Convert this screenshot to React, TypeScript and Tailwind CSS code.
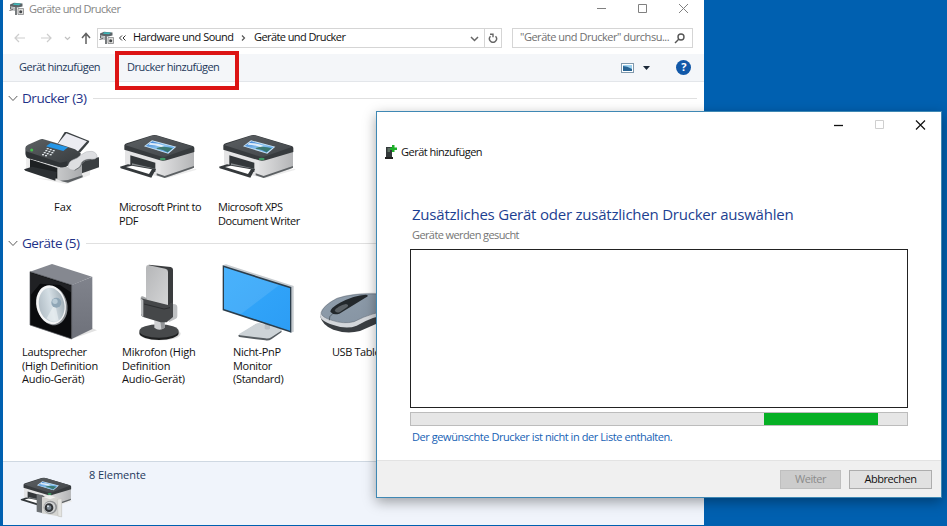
import React from "react";

type Part = { children: React.ReactNode };

function FaxIcon() {
  return (
    <svg width="83" height="60" viewBox="60 51 249 180">
      <defs>
        <linearGradient id="fxTop" x1="0" y1="0" x2="1" y2="1">
          <stop offset="0" stopColor="#5d6164" />
          <stop offset="1" stopColor="#34383b" />
        </linearGradient>
        <linearGradient id="fxSide" x1="0" y1="0" x2="1" y2="0">
          <stop offset="0" stopColor="#efefef" />
          <stop offset="1" stopColor="#a9abad" />
        </linearGradient>
      </defs>
      <path d="M110 205L200 222L270 195V180L200 210Z" fill="#ebebeb" />
      <path d="M240 148L297 142V172L246 190Z" fill="#3b3f42" />
      <path d="M78 128L172 168L206 172L246 160V200L204 216Q196 218 186 214L78 176Z" fill="url(#fxSide)" />
      <path d="M90 148L172 174V206L90 180Z" fill="#1d2022" />
      <path d="M72 178L96 170L170 186L166 212L76 182Z" fill="#2c3033" />
      <path d="M180 212L204 218L248 202V196L204 210Z" fill="#5c6063" />
      <path d="M194 66L201 66L268 93L266 98L240 128L166 112Z" fill="#3b4043" />
      <path d="M199 70L261 94L232 126L168 108Z" fill="#ececf2" />
      <path d="M128 87L166 98L225 118L242 130Q244 138 236 144L202 168Q190 174 176 170L84 144Q76 140 76 128V114Q76 108 84 104L118 89Q124 86 128 87Z" fill="url(#fxTop)" />
      <path d="M78 124L180 158L202 154V168Q190 174 176 170L84 144Q76 140 78 124Z" fill="#2f3336" />
      <path d="M152 99L204 112L190 123L138 109Z" fill="#2496e8" />
      <g fill="#dfe4e8">
        <rect x="140" y="114" width="6" height="4" /><rect x="149" y="117" width="6" height="4" /><rect x="158" y="120" width="6" height="4" />
        <rect x="136" y="120" width="6" height="4" /><rect x="145" y="123" width="6" height="4" /><rect x="154" y="126" width="6" height="4" />
        <rect x="131" y="126" width="6" height="4" /><rect x="140" y="129" width="6" height="4" /><rect x="149" y="132" width="6" height="4" />
        <rect x="126" y="132" width="6" height="4" /><rect x="135" y="135" width="6" height="4" />
      </g>
      <circle cx="95" cy="120" r="4.5" fill="#45c24d" />
      <path d="M204 172Q206 154 218 150Q232 146 244 134Q258 122 276 124Q292 128 291 142Q286 150 270 147Q254 146 244 158Q242 172 226 180Q208 182 204 172Z" fill="#dddee1" stroke="#b0b3b6" strokeWidth="1.5" />
      <path d="M224 181Q243 173 247 159Q256 149 270 149" fill="none" stroke="#6b6f72" strokeWidth="3" />
    </svg>
  );
}

function PrinterBody() {
  return (
    <>
      <defs>
        <linearGradient id="prTop" x1="0" y1="0" x2="1" y2="1">
          <stop offset="0" stopColor="#5b5f62" />
          <stop offset="1" stopColor="#42464a" />
        </linearGradient>
        <linearGradient id="prSide" x1="0" y1="0" x2="1" y2="0">
          <stop offset="0" stopColor="#e0e0e1" />
          <stop offset="1" stopColor="#b4b5b7" />
        </linearGradient>
        <linearGradient id="prScr" x1="0" y1="0" x2="1" y2="1">
          <stop offset="0" stopColor="#2d74cc" />
          <stop offset=".5" stopColor="#8cc4ef" />
          <stop offset="1" stopColor="#3b8fdd" />
        </linearGradient>
      </defs>
      <path d="M480 200L586 176L590 179L500 205Z" fill="#ececec" />
      <path d="M375 116L485 150V202L375 176Z" fill="#e4e4e5" />
      <path d="M480 150L582 122V168Q582 174 574 177L504 201Q494 204 482 200Z" fill="url(#prSide)" />
      <path d="M470 196L494 204L582 173V168L494 198L470 190Z" fill="#5c6063" />
      <path d="M391 136L466 158V186L391 172Z" fill="#33373a" />
      <path d="M396 160L466 176V184L396 170Z" fill="#85898c" />
      <path d="M360 170L384 163L468 177L454 203L362 175Z" fill="#34383b" />
      <path d="M378 171L396 167L456 178L447 192Z" fill="#fff" />
      <path d="M373 106Q374 102 380 100L452 77Q462 74 470 76L578 108Q583 110 583 114V126L502 150Q490 154 480 151L373 119Z" fill="#373b3e" />
      <path d="M375 105L454 78Q462 75 470 77L580 110L500 139Q490 142 480 139Z" fill="url(#prTop)" />
      <path d="M456 91L529 110L505 131L432 109Z" fill="#cfe8f8" />
      <path d="M457 94L524 111L503 128L437 108Z" fill="url(#prScr)" />
      <path d="M450 99Q474 98 494 108L484 111Q464 104 446 104Z" fill="#fff" opacity=".8" />
      <path d="M470 114Q492 106 518 115L503 127Q490 118 470 116Z" fill="#33705e" opacity=".85" />
      <ellipse cx="488" cy="147" rx="9" ry="4" fill="#3f9a65" />
    </>
  );
}

function PrinterIcon() {
  return (
    <svg width="82" height="50" viewBox="351 60 246 150">
      <PrinterBody />
    </svg>
  );
}

function SpeakerIcon() {
  return (
    <svg width="69" height="79" viewBox="84 81 207 237">
      <defs>
        <linearGradient id="spCone" x1="0" y1="0" x2="1" y2="0">
          <stop offset="0" stopColor="#b3bfc7" />
          <stop offset=".5" stopColor="#d5dfe5" />
          <stop offset="1" stopColor="#a3b0b8" />
        </linearGradient>
        <linearGradient id="spSide" x1="0" y1="0" x2="0" y2="1">
          <stop offset="0" stopColor="#80838c" />
          <stop offset="1" stopColor="#6e717a" />
        </linearGradient>
      </defs>
      <path d="M215 312L291 286L276 280Z" fill="#e2e2e2" />
      <path d="M90 110L156 87L276 125L215 151Z" fill="#858890" />
      <path d="M215 150L277 125V282L215 312Z" fill="url(#spSide)" />
      <path d="M90 110L215 150V312L90 270Z" fill="#0b0c0e" stroke="#54575d" strokeWidth="2" />
      <path d="M92 113L213 152V172L180 150L120 146L92 180Z" fill="#2e3033" opacity=".6" />
      <ellipse cx="157" cy="212" rx="45" ry="59" transform="rotate(-12 157 212)" fill="#85898d" />
      <ellipse cx="153" cy="209" rx="44" ry="59" transform="rotate(-12 153 209)" fill="#f5f6f7" />
      <ellipse cx="155" cy="210" rx="38" ry="52" transform="rotate(-12 155 210)" fill="url(#spCone)" />
      <path d="M165 205L140 250Q156 266 176 256Z" fill="#eef3f5" opacity=".6" />
      <circle cx="169" cy="203" r="15" fill="#8fa6b6" />
      <circle cx="165" cy="199" r="8" fill="#b9cbd6" />
    </svg>
  );
}

function MicIcon() {
  return (
    <svg width="43" height="79" viewBox="414 81 129 237">
      <defs>
        <linearGradient id="mcFace" x1="0" y1="0" x2="1" y2="1">
          <stop offset="0" stopColor="#b5b6b8" />
          <stop offset="1" stopColor="#d4d5d6" />
        </linearGradient>
      </defs>
      <ellipse cx="480" cy="296" rx="62" ry="20" fill="#dedede" />
      <ellipse cx="477" cy="294" rx="59" ry="21" fill="#1f2021" />
      <ellipse cx="477" cy="288" rx="59" ry="20" fill="#47494b" />
      <path d="M463 248H494V278Q478 290 463 278Z" fill="#cfd0d2" />
      <path d="M480 250H494V279L484 283Z" fill="#929497" />
      <path d="M446 89L512 96Q519 98 519 104V215L500 220L446 200Z" fill="#3a3c3e" />
      <path d="M444 90L496 101Q504 103 504 110V212L438 196V98Q438 90 444 90Z" fill="url(#mcFace)" />
      <path d="M422 188Q422 184 428 184L440 189V196H422Z" fill="#a3a5a7" />
      <path d="M512 206L526 208Q532 210 532 216V244Q532 250 526 252L506 262Z" fill="#bfc1c3" />
      <path d="M423 190L504 210L519 202V246L500 262H482L432 247Q423 244 423 236Z" fill="#454749" />
      <path d="M432 207L492 222L510 218" fill="none" stroke="#2b2d2f" strokeWidth="3" />
      <path d="M423 190V236Q423 243 430 246V196Z" fill="#b8babc" />
    </svg>
  );
}

function MonitorIcon() {
  return (
    <svg width="75" height="80" viewBox="60 81 225 240">
      <defs>
        <linearGradient id="mnScr" x1="0" y1="0" x2="1" y2="1">
          <stop offset="0" stopColor="#35aafc" />
          <stop offset="1" stopColor="#2c9df5" />
        </linearGradient>
      </defs>
      <path d="M114 302L168 268Q174 265 182 267L240 284Q247 287 244 292L214 313Q206 318 196 316L118 306Z" fill="#565c61" />
      <path d="M116 298L168 266Q174 263 182 265L240 281Q248 284 243 288L214 307Q206 312 196 310L120 301Z" fill="#cdd3d7" />
      <path d="M194 250L210 254V281Q202 286 194 281Z" fill="#b9bfc4" />
      <path d="M68 91L78 88L281 153V290L272 293Z" fill="#c6cbcf" />
      <path d="M68 91L274 156V293L68 226Z" fill="#2b3d4b" />
      <path d="M72 97L270 160V287L72 222Z" fill="url(#mnScr)" />
      <path d="M72 97L238 150L122 238L72 222Z" fill="#fff" opacity=".1" />
    </svg>
  );
}

function MouseIcon() {
  return (
    <svg width="74" height="80" viewBox="354 81 222 240">
      <defs>
        <linearGradient id="msTop" x1="0" y1="0" x2="1" y2="1">
          <stop offset="0" stopColor="#909eac" />
          <stop offset="1" stopColor="#8492a1" />
        </linearGradient>
      </defs>
      <path d="M360 242Q366 270 400 284Q440 298 480 288L576 246V200L420 200Z" fill="#3a3e42" />
      <path d="M360 238Q362 214 408 190Q460 170 540 174L576 190V236Q520 242 470 272Q440 284 400 270Q358 258 360 238Z" fill="#d4d7db" />
      <path d="M364 232Q372 210 412 190Q460 174 540 177L576 190V226Q520 230 462 260Q430 268 396 256Q362 246 364 232Z" fill="url(#msTop)" stroke="#5b6570" strokeWidth="1.5" />
      <path d="M391 230Q392 218 420 203Q462 181 498 179Q510 182 496 188L418 236Q400 242 391 230Z" fill="#23282c" />
      <path d="M404 226Q414 212 438 207Q448 209 442 216L420 231Q408 236 404 226Z" fill="#5a6065" />
      <path d="M398 236Q386 244 388 256" fill="none" stroke="#3a4249" strokeWidth="2" />
    </svg>
  );
}

function PrinterCameraIcon() {
  return (
    <svg width="52" height="42" viewBox="60 108 156 126">
      <g transform="translate(-183 62) scale(.68)">
        <PrinterBody />
      </g>
      <path d="M110 162L130 166V220L110 215Z" fill="#6c7073" />
      <path d="M126 172L150 166L185 176V231L126 220Z" fill="#d4d4d1" />
      <path d="M172 178L185 176V231L174 228Z" fill="#e4e4e1" stroke="#a9aaa8" strokeWidth="1" />
      <path d="M132 172L148 166L166 172L150 178Z" fill="#f0f0ee" />
      <circle cx="151" cy="202" r="20" fill="#8f9193" />
      <circle cx="149" cy="202" r="17" fill="#d0d2d3" />
      <circle cx="147" cy="203" r="13" fill="#303336" />
      <circle cx="147" cy="203" r="7" fill="#7b868f" />
      <circle cx="144" cy="199" r="3" fill="#d9e3ea" />
    </svg>
  );
}

function DevicesGlyph() {
  return (
    <svg width="16" height="14" viewBox="0 0 16 14">
      <path d="M1 2.500L5 .8L13.500 1.500V4.500L9 5.500L1 4.500Z" fill="#5c6468" />
      <path d="M5 1.200L12 1.500L10 3.200L4 2.800Z" fill="#3db9ba" />
      <path d="M1.500 4.800L6 5.500V9L1.500 8Z" fill="#b4b8ba" />
      <path d="M.5 8.500L4 7.500M1.500 4.500V7" stroke="#666" />
      <path d="M6 5H8V13H6Z" fill="#777b7d" />
      <path d="M9 6.500H14.500V12.500H9Z" fill="#dededc" stroke="#858788" strokeWidth=".8" />
      <circle cx="11.700" cy="9.800" r="1.500" fill="#44474a" />
    </svg>
  );
}

function Chevron() {
  return (
    <svg width="10" height="7" viewBox="0 0 10 7" fill="none" stroke="#5c5c5c" strokeWidth="1">
      <path d="M.7 1L5 5.500L9.300 1" />
    </svg>
  );
}

function GroupHeader({ children }: Part) {
  return (
    <div className="flex h-[18px] items-center pl-[5px] pr-[7px]">
      <Chevron />
      <span className="ml-1 text-[13.5px] leading-[18px] tracking-[-0.45px] text-[#1e3287]">{children}</span>
      <div className="ml-[6px] mt-px h-px flex-1 bg-[#e0e0e0]" />
    </div>
  );
}

function Label({ children, className }: Part & { className: string }) {
  return (
    <div className={`whitespace-nowrap text-[11px] leading-[13.5px] text-[#111] ${className}`}>{children}</div>
  );
}

function MainWindow() {
  return (
    <div className="absolute left-[3px] top-0 flex h-[525px] w-[701px] flex-col overflow-hidden bg-white">
      <div className="flex h-[18px] items-center pl-[6px]">
        <DevicesGlyph />
        <span className="ml-1 text-[11px] tracking-[-0.58px] text-[#858585]">Geräte und Drucker</span>
        <svg className="ml-auto mr-[14px]" width="94" height="12" viewBox="0 0 94 12" fill="none" stroke="#808080">
          <path d="M1 5.500H10M42.500 1.500H50.500V9.500H42.500ZM83 1L92 10M92 1L83 10" />
        </svg>
      </div>
      <div className="mt-[10px] flex h-5 items-center pl-[10px]">
        <svg width="78" height="14" viewBox="0 0 78 14" fill="none">
          <path d="M12 7H2M6 3L2 7L6 11M28 7H38M34 3L38 7L34 11" stroke="#cdcdcd" strokeWidth="1.200" />
          <path d="M52 6L54.500 8.500L57 6" stroke="#c0c0c0" strokeWidth="1.200" />
          <path d="M73 13V3M69 7L73 2.500L77 7" stroke="#606060" strokeWidth="1.500" />
        </svg>
        <div className="ml-[6px] flex h-5 w-[405px] items-center border border-[#d5d5d5] pl-px">
          <DevicesGlyph />
          <svg className="ml-[3px]" width="9" height="8" viewBox="0 0 9 8" fill="none" stroke="#333">
            <path d="M4 1.500L1.500 4L4 6.500M7.500 1.500L5 4L7.500 6.500" />
          </svg>
          <span className="mb-[2px] ml-[6px] w-[101px] whitespace-nowrap text-[11px] tracking-[-0.5px] text-[#111]">Hardware und Sound</span>
          <svg className="ml-[7px]" width="5" height="8" viewBox="0 0 5 8" fill="none" stroke="#555">
            <path d="M1 1.500L3.500 4L1 6.500" strokeWidth="1.200" />
          </svg>
          <span className="mb-[2px] ml-2 whitespace-nowrap text-[11px] tracking-[-0.58px] text-[#111]">Geräte und Drucker</span>
          <svg className="ml-auto mr-[5px] mt-[2px]" width="9" height="6" viewBox="0 0 9 6" fill="none" stroke="#666" strokeWidth="1.500">
            <path d="M1 1L4.500 4.500L8 1" />
          </svg>
          <div className="flex h-full w-[17px] items-center justify-center border-l border-[#d5d5d5]">
            <svg width="10" height="10" viewBox="0 0 10 10" fill="none" stroke="#666" strokeWidth="1.400">
              <path d="M2.500 3.200A3.500 3.500 0 1 0 7.500 3.200M2 1.200H5V4.200" />
            </svg>
          </div>
        </div>
        <div className="ml-[10px] flex h-5 w-[181px] items-center border border-[#d5d5d5] pl-[7px]">
          <span className="mb-px whitespace-nowrap text-[11px] tracking-[-0.48px] text-[#707070]">"Geräte und Drucker" durchsu...</span>
          <svg className="ml-auto mr-[6px] shrink-0" width="12" height="11" viewBox="0 0 12 11" fill="none" stroke="#555" strokeWidth="1.400">
            <circle cx="7" cy="4" r="3" />
            <path d="M4.700 6.300L1 10" />
          </svg>
        </div>
      </div>
      <div className="mt-[6px] flex h-7 items-center border-b border-[#e3e6ea] bg-[#f4f6f9] pl-4 text-[11px] tracking-[-0.5px] text-[#1e395b]">
        <span className="w-[108px] whitespace-nowrap">Gerät hinzufügen</span>
        <span className="whitespace-nowrap">Drucker hinzufügen</span>
        <svg className="ml-auto" width="29" height="10" viewBox="0 0 29 10">
          <rect x=".5" y=".5" width="12" height="9" fill="#fff" stroke="#8099ad" />
          <path d="M2 2H11V8H2Z" fill="#9bd0ef" />
          <path d="M2 3Q6 3 11 6V8H2Z" fill="#286494" />
          <path d="M22 3H29L25.500 7Z" fill="#1b2838" />
        </svg>
        <div className="ml-[26px] mr-[13px] flex size-[15px] items-center justify-center rounded-full bg-[#1158a8] text-[11px] font-bold text-white">?</div>
      </div>
      <div className="mt-[7px]">
        <GroupHeader>Drucker (3)</GroupHeader>
      </div>
      <div className="grid h-[127px] grid-cols-[repeat(4,100px)] grid-rows-[93px_auto] pl-[9px] pt-5">
        <div className="flex h-[73px] items-start pl-2"><FaxIcon /></div>
        <div className="pl-[5px] pt-[3px]"><PrinterIcon /></div>
        <div className="pl-1 pt-[3px]"><PrinterIcon /></div>
        <div />
        <Label className="-mt-[20px] pl-[42px]">Fax</Label>
        <Label className="-mt-[20px] pl-[7px] tracking-[-0.4px]">Microsoft Print to<br />PDF</Label>
        <Label className="-mt-[20px] pl-[6px] tracking-[-0.45px]">Microsoft XPS<br />Document Writer</Label>
      </div>
      <GroupHeader>Geräte (5)</GroupHeader>
      <div className="grid grid-cols-[repeat(4,100px)] grid-rows-[83px_auto] pl-[9px] pt-[10px]">
        <div className="pl-4"><SpeakerIcon /></div>
        <div className="pl-[26px]"><MicIcon /></div>
        <div className="pl-2"><MonitorIcon /></div>
        <div className="pl-[6px]"><MouseIcon /></div>
        <Label className="pl-[10px] tracking-[-0.25px]">Lautsprecher<br />(High Definition<br />Audio-Gerät)</Label>
        <Label className="pl-[10px] tracking-[-0.2px]">Mikrofon (High<br />Definition<br />Audio-Gerät)</Label>
        <Label className="pl-[21px] tracking-[-0.3px]">Nicht-PnP<br />Monitor<br />(Standard)</Label>
        <Label className="pl-5 tracking-[-0.4px]">USB Tablet</Label>
      </div>
      <div className="mt-auto flex h-16 items-start border-t border-[#cfd8e2] bg-[#f0f4fb] pl-[17px] pt-[14px]">
        <PrinterCameraIcon />
        <span className="-mt-[9px] ml-[17px] text-[11px] leading-4 tracking-[-0.05px] text-[#1e395b]">8 Elemente</span>
      </div>
      <div className="absolute left-[112px] top-[51px] h-[39px] w-[124px] border-4 border-[#dc1414]" />
    </div>
  );
}

function Dialog() {
  return (
    <div className="absolute left-[376px] top-[111px] flex h-[387px] w-[566px] flex-col border border-[#3f88b4] bg-white shadow-[0_4px_12px_rgba(0,0,0,0.35)]">
      <div className="flex h-[26px] justify-end pr-[15px] pt-[7px]">
        <svg width="93" height="12" viewBox="0 0 93 12" fill="none">
          <path d="M1 6.500H10" stroke="#111" strokeWidth="1.300" />
          <path d="M42.500 1.500H50.500V9.500H42.500Z" stroke="#cfcfcf" />
          <path d="M83 1.500L92 10.500M92 1.500L83 10.500" stroke="#111" strokeWidth="1.200" />
        </svg>
      </div>
      <div className="mt-[6px] flex h-4 items-center pl-2">
        <svg width="12" height="16" viewBox="0 0 12 16">
          <path d="M1 3H7V13H1Z" fill="#33393a" />
          <path d="M2.500 5H5M2.500 7H5" stroke="#85a589" />
          <path d="M0 13H8V15H0Z" fill="#222" />
          <path d="M5 3.500H7V1H9.500V3.500H12V6H9.500V8H7V6H5Z" fill="#1db029" />
        </svg>
        <span className="ml-1 text-[11px] tracking-[-0.5px] text-[#111]">Gerät hinzufügen</span>
      </div>
      <div className="mt-[44px] whitespace-nowrap pl-[35px] text-[15px] leading-5 tracking-[-0.22px] text-[#1d3f91]">Zusätzliches Gerät oder zusätzlichen Drucker auswählen</div>
      <div className="mt-[3px] pl-[35px] text-[11px] leading-4 tracking-[-0.6px] text-[#757575]">Geräte werden gesucht</div>
      <div className="ml-[33px] mt-[6px] h-[159px] w-[498px] border border-[#222]" />
      <div className="ml-[33px] mt-1 h-[14px] w-[498px] border border-[#bcbcbc] bg-[#e6e6e6]">
        <div className="ml-[353px] h-3 w-[114px] bg-[#06b025]" />
      </div>
      <div className="mt-[3px] pl-[35px] text-[11px] leading-4 tracking-[-0.43px] text-[#1662b5]">Der gewünschte Drucker ist nicht in der Liste enthalten.</div>
      <div className="mt-auto flex h-[37px] items-center justify-end gap-2 border-t border-[#e3e3e3] bg-[#f0f0f0] pr-[9px] text-[11px] tracking-[-0.45px]">
        <div className="flex h-[19px] w-[61px] items-center justify-center border border-[#bfbfbf] bg-[#cccccc] text-[#8b8b8b]">Weiter</div>
        <div className="flex h-[19px] w-[83px] items-center justify-center border border-[#adadad] bg-[#e1e1e1] text-[#111]">Abbrechen</div>
      </div>
    </div>
  );
}

export default function App() {
  return (
    <div className="relative h-[526px] w-[947px] overflow-hidden bg-[#0060b0] font-['Open_Sans',sans-serif]">
      <MainWindow />
      <Dialog />
    </div>
  );
}
